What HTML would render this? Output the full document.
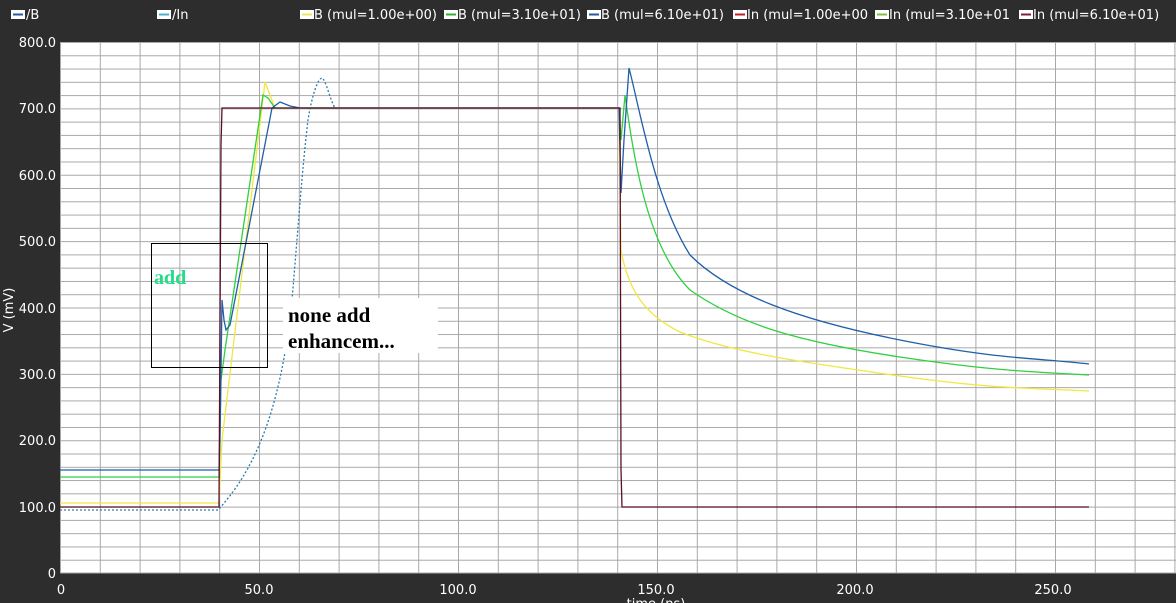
<!DOCTYPE html>
<html><head><meta charset="utf-8"><style>
html,body{margin:0;padding:0;background:#2d2d2d;width:1176px;height:603px;overflow:hidden}
svg{display:block}
</style></head><body>
<svg width="1176" height="603" viewBox="0 0 1176 603" xmlns="http://www.w3.org/2000/svg" font-family="DejaVu Sans, Liberation Sans, sans-serif">
<defs>
<pattern id="g" x="60" y="42" width="39.8" height="13.275" patternUnits="userSpaceOnUse">
<rect width="39.8" height="13.275" fill="#fff"/>
<path d="M0.5 0V13.275M0 0.5H39.8" stroke="#a8a8a8" stroke-width="1" fill="none"/>
</pattern>
</defs>
<rect x="0" y="0" width="1176" height="603" fill="#2d2d2d"/>
<rect x="60" y="42" width="1116" height="531" fill="url(#g)"/>
<line x1="60" y1="573" x2="1176" y2="573" stroke="#a8a8a8"/>
<g font-size="13" fill="#fff">
<rect x="11" y="10" width="14" height="9" fill="#fff"/><line x1="13" y1="14.5" x2="23" y2="14.5" stroke="#2a5a9a" stroke-width="2"/><text x="26" y="19">/B</text>
<rect x="157" y="10" width="14" height="9" fill="#fff"/><line x1="159" y1="14.5" x2="169" y2="14.5" stroke="#4ab0d0" stroke-width="2"/><text x="172" y="19">/In</text>
<rect x="300" y="10" width="14" height="9" fill="#fff"/><line x1="302" y1="14.5" x2="312" y2="14.5" stroke="#e8e860" stroke-width="2"/><text x="314" y="19">B (mul=1.00e+00)</text>
<rect x="444" y="10" width="14" height="9" fill="#fff"/><line x1="446" y1="14.5" x2="456" y2="14.5" stroke="#30b030" stroke-width="2"/><text x="458" y="19">B (mul=3.10e+01)</text>
<rect x="587" y="10" width="14" height="9" fill="#fff"/><line x1="589" y1="14.5" x2="599" y2="14.5" stroke="#2a5a9a" stroke-width="2"/><text x="601" y="19">B (mul=6.10e+01)</text>
<rect x="733" y="10" width="14" height="9" fill="#fff"/><line x1="735" y1="14.5" x2="745" y2="14.5" stroke="#c02020" stroke-width="2"/><text x="747" y="19">In (mul=1.00e+00</text>
<rect x="875" y="10" width="14" height="9" fill="#fff"/><line x1="877" y1="14.5" x2="887" y2="14.5" stroke="#80c040" stroke-width="2"/><text x="889" y="19">In (mul=3.10e+01</text>
<rect x="1019" y="10" width="14" height="9" fill="#fff"/><line x1="1021" y1="14.5" x2="1031" y2="14.5" stroke="#802040" stroke-width="2"/><text x="1033" y="19">In (mul=6.10e+01)</text>
</g>
<g font-size="13" fill="#fff" text-anchor="end">
<text x="56" y="47">800.0</text><text x="56" y="113">700.0</text><text x="56" y="180">600.0</text><text x="56" y="246">500.0</text><text x="56" y="313">400.0</text><text x="56" y="379">300.0</text><text x="56" y="445">200.0</text><text x="56" y="512">100.0</text><text x="56" y="578">0</text>
</g>
<text transform="translate(13,310) rotate(-90)" font-size="13" fill="#fff" text-anchor="middle">V (mV)</text>
<g font-size="13" fill="#fff" text-anchor="middle">
<text x="61" y="594">0</text><text x="259" y="594">50.0</text><text x="458" y="594">100.0</text><text x="656" y="594">150.0</text><text x="855" y="594">200.0</text><text x="1053" y="594">250.0</text>
<text x="656" y="608">time (ns)</text>
</g>
<g fill="none" stroke-width="1.3">
<path d="M60 510H218C250 475 280 420 292 300C298 230 302 170 308 120C312 95 318 78 322 78C326 80 330 100 335 108" stroke="#2a7ab0" stroke-dasharray="2,2"/>
<path d="M60 503H219L222 440L265 82L270 95L275 108H619L621 250C628 290 645 315 680 332C730 352 800 362 900 376S1040 388 1089 391" stroke="#f0e840"/>
<path d="M60 477H219L221 380L225 350L263 95L268 98L275 108H619L621 140L625 95C635 170 650 250 690 290C740 325 800 342 900 357S1040 372 1089 375" stroke="#30d040"/>
<path d="M60 470H219L220 440L222 300L224 320L226 330L230 325L272 108L280 102L290 106L300 108H619L621 193L624 140L629 68C640 110 655 200 690 255C730 295 800 320 900 340S1040 358 1089 364" stroke="#1f5fa8"/>
<path d="M60 507H219L221 145L222 108H620L621 470L622 507H1089" stroke="#5a0f2a"/>
</g>
<rect x="151.5" y="243.5" width="116" height="124" fill="none" stroke="#000" stroke-width="1"/>
<text x="154" y="284" font-family="Liberation Serif, serif" font-weight="bold" font-size="20" fill="#22dd88">add</text>
<rect x="283" y="298" width="155" height="55" fill="#fff"/>
<text x="288" y="322" font-family="Liberation Serif, serif" font-weight="bold" font-size="21" fill="#000">none add</text>
<text x="288" y="348" font-family="Liberation Serif, serif" font-weight="bold" font-size="21" fill="#000">enhancem...</text>
</svg>
</body></html>
